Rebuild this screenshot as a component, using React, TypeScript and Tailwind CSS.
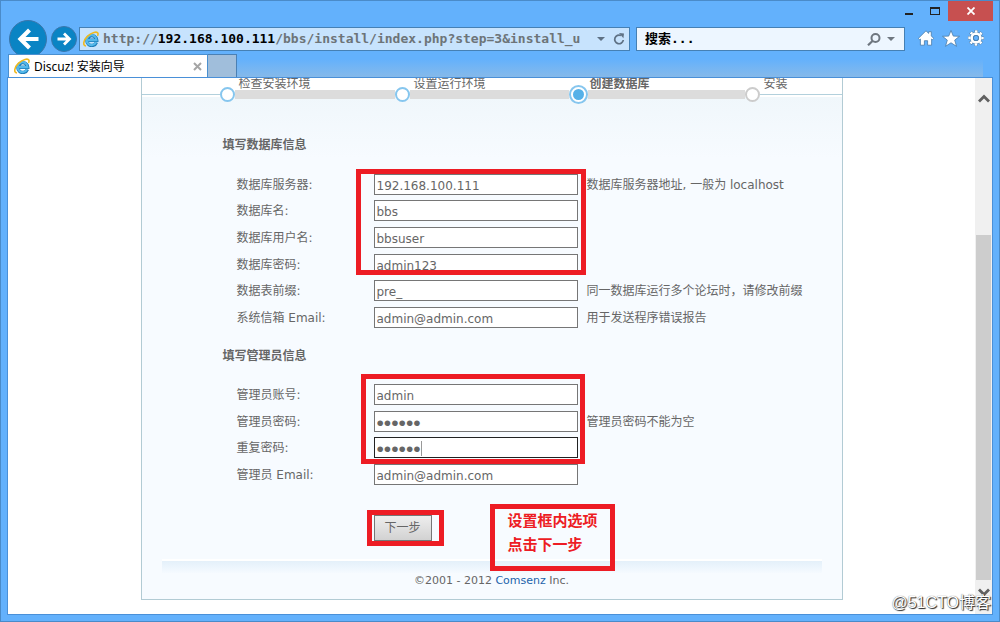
import React from "react";

type Field = {
  id: string;
  label: string;
  value: string;
  type?: string;
  hint?: string;
  active?: boolean;
};

const databaseFields: Field[] = [
  { id: "dbhost", label: "数据库服务器:", value: "192.168.100.111", hint: "数据库服务器地址, 一般为 localhost" },
  { id: "dbname", label: "数据库名:", value: "bbs" },
  { id: "dbuser", label: "数据库用户名:", value: "bbsuser" },
  { id: "dbpw", label: "数据库密码:", value: "admin123" },
  { id: "tablepre", label: "数据表前缀:", value: "pre_", hint: "同一数据库运行多个论坛时，请修改前缀" },
  { id: "sysemail", label: "系统信箱 Email:", value: "admin@admin.com", hint: "用于发送程序错误报告" },
];

const adminFields: Field[] = [
  { id: "username", label: "管理员账号:", value: "admin" },
  { id: "password", label: "管理员密码:", value: "123456", type: "password", hint: "管理员密码不能为空" },
  { id: "password2", label: "重复密码:", value: "123456", type: "password", active: true },
  { id: "email", label: "管理员 Email:", value: "admin@admin.com" },
];

function IeLogo() {
  return (
    <svg viewBox="0 0 16 16" className="size-4 shrink-0" aria-hidden="true">
      <path d="M13.400 11.300A4.900 4.900 0 1 1 13.700 9.200H5" fill="none" stroke="#1d7cb8" strokeWidth="3.400" />
      <path d="M13 11.300A4.900 4.900 0 1 1 13.500 9.200H5" fill="none" stroke="#54b8ea" strokeWidth="2.200" />
      <path d="M3 15C-.8 14.500.6 9 4.600 5.200 8.800 1.200 14 .2 14.900 2.200c.3.700.1 1.600-.4 2.600" fill="none" stroke="#efb920" strokeWidth="1.600" />
    </svg>
  );
}

function FieldRow({ field }: { field: Field }) {
  return (
    <div className="flex items-center">
      <label htmlFor={field.id} className="w-[137px] shrink-0 pt-px">
        {field.label}
      </label>
      <span className="relative flex shrink-0">
        <input
          id={field.id}
          type={field.type ?? "text"}
          defaultValue={field.value}
          className={
            "h-[21px] w-[204px] border bg-white pt-[3px] pl-[2px] leading-4 text-[#666] outline-none " +
            (field.type === "password" ? "font-['Liberation_Sans',sans-serif] text-[21px] " : "text-[12px] ") +
            (field.active ? "border-[#222]" : "border-[#767676]")
          }
        />
        {field.active && <span className="absolute top-1 left-[47px] h-[15px] w-px bg-[#999]" />}
      </span>
      {field.hint && <span className="ml-[9px] pt-px whitespace-nowrap">{field.hint}</span>}
    </div>
  );
}

function Dot() {
  return <span className="size-[15px] shrink-0 rounded-full border-2 border-[#86c6ee] bg-white" />;
}

function Steps() {
  return (
    <header>
      <ol className="grid h-[9px] grid-cols-[175px_176px_174px_78px] justify-end leading-3">
        <li>检查安装环境</li>
        <li>设置运行环境</li>
        <li className="font-bold">创建数据库</li>
        <li>安装</li>
      </ol>
      <div className="flex h-[15px] items-center" aria-hidden="true">
        <span className="h-px w-[78px] bg-[#b2d0dc]" />
        <Dot />
        <span className="h-[9px] w-40 bg-[#dcdcdc]" />
        <Dot />
        <span className="h-[9px] w-[159px] bg-[#dcdcdc]" />
        <span className="flex size-[19px] shrink-0 items-center justify-center rounded-full border-2 border-[#86c6ee] bg-white">
          <span className="size-[11px] rounded-full bg-[#56b1e8]" />
        </span>
        <span className="h-[9px] w-[157px] bg-[#dcdcdc]" />
        <span className="size-[15px] shrink-0 rounded-full border-2 border-[#ccc] bg-white" />
        <span className="h-px flex-1 bg-[#b2d0dc]" />
      </div>
    </header>
  );
}

function Toolbar() {
  return (
    <div className="flex h-6 items-center pr-[15px] pl-2">
      <button aria-label="后退" className="relative size-[38px] shrink-0 rounded-full border border-[#3a76ab] bg-[#0a84c4]">
        <svg viewBox="0 0 36 36" className="size-full" aria-hidden="true">
          <path d="M28.500 18H11M19.500 9L10.500 18l9 9" fill="none" stroke="#fff" strokeWidth="4.200" />
        </svg>
      </button>
      <button aria-label="前进" className="ml-1 size-[26px] shrink-0 rounded-full border border-[#3a76ab] bg-[#0a84c4]">
        <svg viewBox="0 0 24 24" className="size-full" aria-hidden="true">
          <path d="M5.500 12H17M12 6.500l5.500 5.500-5.500 5.500" fill="none" stroke="#fff" strokeWidth="2.800" />
        </svg>
      </button>
      <div className="ml-[2px] flex h-6 w-[551px] min-w-0 shrink items-center border border-[#4580b4] bg-[#c7e3fd] pr-1 pl-[3px]">
        <IeLogo />
        <div
          role="textbox"
          aria-label="地址"
          className="ml-1 min-w-0 flex-1 overflow-hidden font-['DejaVu_Sans_Mono','Liberation_Mono',monospace] text-[13px] font-bold whitespace-nowrap text-[#6d7478]"
        >
          http://<span className="text-black">192.168.100.111</span>/bbs/install/index.php?step=3&amp;install_u
        </div>
        <svg viewBox="0 0 8 4" className="mr-2 h-1 w-2" aria-hidden="true">
          <path d="M0 0h8L4 4z" fill="#5e7184" />
        </svg>
        <svg viewBox="0 0 12 12" className="size-3" aria-hidden="true">
          <path d="M8 2.600A4.300 4.300 0 1 0 10.300 7" fill="none" stroke="#5e7184" strokeWidth="1.700" />
          <path d="M6 0l5 .4L10.400 5.200z" fill="#5e7184" />
        </svg>
      </div>
      <div className="ml-[6px] flex h-6 min-w-0 flex-1 items-center border border-[#4580b4] bg-[#edf6ff] pr-[9px] pl-2">
        <input
          aria-label="搜索"
          placeholder="搜索..."
          className="min-w-0 flex-1 bg-transparent font-['DejaVu_Sans_Mono','Noto_Sans_CJK_SC',monospace] text-[13px] font-bold outline-none placeholder:text-black"
        />
        <svg viewBox="0 0 14 13" className="mr-[6px] h-[13px] w-[14px]" aria-hidden="true">
          <circle cx="8.500" cy="5" r="4" fill="none" stroke="#6f7780" strokeWidth="2" />
          <path d="M5.500 8L1 12.300" stroke="#6f7780" strokeWidth="2.200" />
        </svg>
        <svg viewBox="0 0 8 4" className="h-1 w-2" aria-hidden="true">
          <path d="M0 0h8L4 4z" fill="#6f7780" />
        </svg>
      </div>
      <div className="ml-[13px] flex items-center gap-2 pb-[2px]">
        <button aria-label="主页">
          <svg viewBox="0 0 16 16" className="block size-4" aria-hidden="true">
            <path d="M8 .8l2.700 2.600V1.700h2.600v4.200l2.400 2.500-1.300 1.300-.8-.7v6.200H9.600v-4.500H6.400v4.500H2.400V9l-.8.700L.3 8.400z" fill="#fff" stroke="#487ba8" strokeWidth=".8" />
          </svg>
        </button>
        <button aria-label="收藏夹">
          <svg viewBox="0 0 18 17" className="block h-[17px] w-[18px]" aria-hidden="true">
            <path d="M9 .5l2.300 5.600 6.200.2-4.800 3.800 1.800 6.200L9 12.800l-5.500 3.500 1.800-6.200L.5 6.300l6.200-.2z" fill="#fff" stroke="#487ba8" strokeWidth=".8" />
          </svg>
        </button>
        <button aria-label="工具">
          <svg viewBox="0 0 16 16" className="block size-4" aria-hidden="true">
            <circle cx="8" cy="8" r="6.600" fill="none" stroke="#487ba8" strokeWidth="3" strokeDasharray="3.400 1.784" strokeDashoffset="1.700" />
            <circle cx="8" cy="8" r="4.200" fill="none" stroke="#487ba8" strokeWidth="4" />
            <circle cx="8" cy="8" r="6.600" fill="none" stroke="#fff" strokeWidth="2.200" strokeDasharray="2.600 2.584" strokeDashoffset="1.300" />
            <circle cx="8" cy="8" r="4.400" fill="none" stroke="#fff" strokeWidth="2.600" />
            <circle cx="8" cy="8" r="2.600" fill="#63b1fc" stroke="#487ba8" strokeWidth=".8" />
          </svg>
        </button>
      </div>
    </div>
  );
}

function Scrollbar() {
  return (
    <div className="flex w-[17px] shrink-0 flex-col items-center bg-[#f0f0f0]" aria-hidden="true">
      <svg viewBox="0 0 12 9" className="mt-4 h-[9px] w-3">
        <path d="M1 7.500l5-5 5 5" fill="none" stroke="#606060" strokeWidth="2.800" />
      </svg>
      <div className="mt-[132px] w-[15px] flex-1 bg-[#cdcdcd]" />
      <svg viewBox="0 0 12 9" className="mt-2 mb-[17px] h-[9px] w-3">
        <path d="M1 1.500l5 5 5-5" fill="none" stroke="#606060" strokeWidth="2.800" />
      </svg>
    </div>
  );
}

export default function App() {
  return (
    <div className="relative flex min-h-screen flex-col border border-[#4a8bc9] bg-[#63b1fc] font-['DejaVu_Sans','Noto_Sans_CJK_SC',sans-serif] text-[12px] text-[#666]">
      <div className="flex h-[26px] items-start justify-end pr-[6px]">
        <button aria-label="最小化" className="px-[9px] pt-3">
          <span className="block h-[2px] w-2 bg-[#222]" />
        </button>
        <button aria-label="最大化" className="px-2 pt-[6px]">
          <span className="block h-2 w-[10px] border border-t-2 border-[#222]" />
        </button>
        <button aria-label="关闭" className="flex h-5 w-[45px] items-center justify-center bg-[#c75050]">
          <svg viewBox="0 0 8 8" className="size-2" aria-hidden="true">
            <path d="M.5.5l7 7M7.500.5l-7 7" stroke="#fff" strokeWidth="1.800" />
          </svg>
        </button>
      </div>

      <Toolbar />

      <div className="relative mt-[3px] flex h-[23px] pl-[7px]">
        <div className="absolute right-4 bottom-0 left-2 h-[18px] bg-linear-to-b from-[#63b1fc] to-[#85b9ea]" />
        <div className="relative flex w-[200px] items-center border border-b-0 border-[#4a90d0] bg-white pr-[5px] pl-[5px] font-['Noto_Sans','Noto_Sans_CJK_SC',sans-serif] text-black">
          <IeLogo />
          <span className="ml-1 flex-1 pt-px">Discuz! 安装向导</span>
          <button aria-label="关闭标签页">
            <svg viewBox="0 0 9 9" className="block size-[9px]" aria-hidden="true">
              <path d="M1 1l7 7M8 1L1 8" stroke="#a5a5a5" strokeWidth="2" />
            </svg>
          </button>
        </div>
        <button aria-label="新建标签页" className="relative w-[29px] border border-b-0 border-l-0 border-[#4a80b4] bg-[#a0bedb]" />
      </div>

      <div className="mx-[6px] mb-[6px] flex flex-1 border border-[#4a90d8] bg-white">
        <main className="min-w-0 flex-1 overflow-hidden">
          <div className="relative mx-auto mb-[14px] w-[702px] border border-t-0 border-[#b2cbd4] bg-[linear-gradient(#fff_19px,#f0f7fb_19px,#f7fbff_80px)]">
            <Steps />

            <form className="px-[81px] pt-[35px]" onSubmit={(e: React.FormEvent) => e.preventDefault()}>
              <h2 className="text-[12px] leading-4 font-bold">填写数据库信息</h2>
              <div className="mt-[18px] grid h-40 grid-rows-6 pl-[14px]">
                {databaseFields.map((field) => (
                  <FieldRow key={field.id} field={field} />
                ))}
              </div>

              <h2 className="mt-[17px] text-[12px] leading-4 font-bold">填写管理员信息</h2>
              <div className="mt-[17px] grid h-[107px] grid-rows-4 pl-[14px]">
                {adminFields.map((field) => (
                  <FieldRow key={field.id} field={field} />
                ))}
              </div>

              <button
                type="submit"
                className="mt-[27px] ml-[151px] block h-[26px] w-[58px] border border-[#767676] bg-linear-to-b from-[#eee] to-[#d2d2d2]"
              >
                下一步
              </button>
            </form>

            <footer className="mx-5 mt-[18px] border-t-2 border-white text-center">
              <div className="h-3 bg-linear-to-b from-[#e4f0fa] to-[#f5faff]" />
              <p className="pb-[10px] text-[11px] leading-4">
                ©2001 - 2012{" "}
                <a href="#comsenz" className="text-[#1c63ab]">
                  Comsenz
                </a>{" "}
                Inc.
              </p>
            </footer>

            {/* Tutorial call-outs laid over the form */}
            <div className="pointer-events-none absolute top-[91px] left-[214px] h-[106px] w-[230px] border-[5px] border-[#ed1c24]" />
            <div className="pointer-events-none absolute top-[296px] left-[219px] h-[90px] w-[224px] border-[5px] border-[#ed1c24]" />
            <div className="pointer-events-none absolute top-[432px] left-[225px] h-9 w-[77px] border-[5px] border-[#ed1c24]" />
            <div className="pointer-events-none absolute top-[426px] left-[348px] h-[67px] w-[125px] border-[5px] border-[#ed1c24] pl-[13px] text-[15px] leading-6 font-bold text-[#ed1c24]">
              设置框内选项
              <br />
              点击下一步
            </div>
          </div>
        </main>
        <Scrollbar />
      </div>

      <div className="pointer-events-none absolute right-2 bottom-[6px] font-['Liberation_Sans','Noto_Sans_CJK_SC',sans-serif] text-[16px] leading-6 text-white [text-shadow:1px_1px_1px_#222,0_0_1px_#555]">
        @51CTO博客
      </div>
    </div>
  );
}
